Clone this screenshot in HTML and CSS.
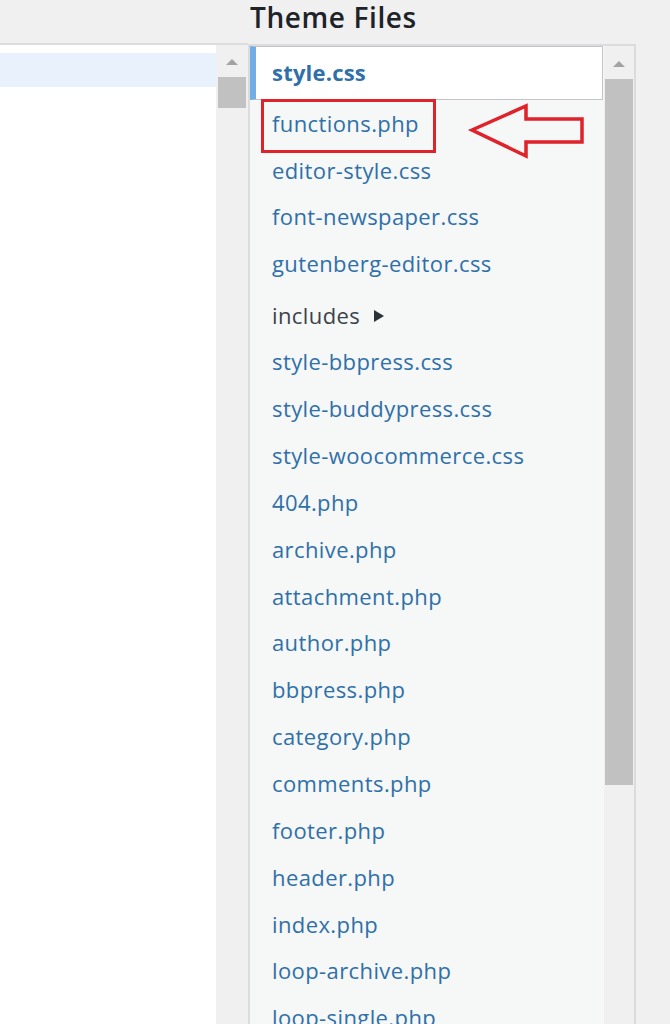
FILE: index.html
```html
<!DOCTYPE html>
<html lang="en">
<head>
<meta charset="utf-8">
<title>Theme Files</title>
<link rel="stylesheet" href="styles.css">
</head>
<body>
<div class="page">
  <div class="editor-col">
    <div class="editor-box">
      <div class="editor-area">
        <div class="editor-line-active"></div>
      </div>
      <div class="vscroll vscroll-left">
        <div class="scroll-arrow"></div>
        <div class="scroll-thumb thumb-small"></div>
      </div>
    </div>
  </div>
  <div class="sidebar">
    <h2 class="title">Theme Files</h2>
    <div class="list-box">
      <ul class="file-list">
        <li class="item current"><span class="link">style.css</span></li>
        <li class="item early"><span class="link">functions.php</span></li>
        <li class="item early"><span class="link">editor-style.css</span></li>
        <li class="item early"><span class="link">font-newspaper.css</span></li>
        <li class="item early"><span class="link">gutenberg-editor.css</span></li>
        <li class="item folder"><span class="folder-name">includes</span><span class="caret"></span></li>
        <li class="item"><span class="link">style-bbpress.css</span></li>
        <li class="item"><span class="link">style-buddypress.css</span></li>
        <li class="item"><span class="link">style-woocommerce.css</span></li>
        <li class="item"><span class="link">404.php</span></li>
        <li class="item"><span class="link">archive.php</span></li>
        <li class="item"><span class="link">attachment.php</span></li>
        <li class="item"><span class="link">author.php</span></li>
        <li class="item"><span class="link">bbpress.php</span></li>
        <li class="item"><span class="link">category.php</span></li>
        <li class="item"><span class="link">comments.php</span></li>
        <li class="item"><span class="link">footer.php</span></li>
        <li class="item"><span class="link">header.php</span></li>
        <li class="item"><span class="link">index.php</span></li>
        <li class="item"><span class="link">loop-archive.php</span></li>
        <li class="item"><span class="link">loop-single.php</span></li>
      </ul>
      <div class="vscroll vscroll-right">
        <div class="scroll-arrow"></div>
        <div class="scroll-thumb thumb-large"></div>
      </div>
    </div>
  </div>
</div>
<div class="highlight-box"></div>
<svg class="arrow" width="130" height="70" viewBox="460 100 130 70" xmlns="http://www.w3.org/2000/svg">
  <polygon points="472,130 526,106 526,119 582,119 582,142 526,142 526,156" fill="none" stroke="#e0222a" stroke-width="3.5" stroke-linejoin="miter"/>
</svg>
</body>
</html>
```
FILE: styles.css
```css
html, body {
  margin: 0;
  padding: 0;
}
body {
  background: #f0f0f1;
  width: 670px;
  height: 1024px;
  overflow: hidden;
  position: relative;
  font-family: "Open Sans", "Noto Sans", sans-serif;
}
.page {
  display: flex;
  align-items: flex-start;
}
.editor-col {
  width: 248px;
  padding-top: 43px;
  flex: none;
}
.editor-box {
  display: flex;
  border-top: 2px solid #dcdcde;
  height: 1000px;
}
.editor-area {
  width: 216px;
  background: #ffffff;
  padding-top: 8px;
}
.editor-line-active {
  height: 34px;
  background: #e8f1fc;
}
.vscroll {
  width: 32px;
  background: #f0f0f1;
  display: flex;
  flex-direction: column;
  align-items: center;
  flex: none;
}
.scroll-arrow {
  width: 0;
  height: 0;
  border-left: 6px solid transparent;
  border-right: 6px solid transparent;
  border-bottom: 6px solid #a3a3a3;
  margin-top: 14px;
  margin-bottom: 12px;
}
.scroll-thumb {
  width: 28px;
  background: #c1c1c1;
}
.thumb-small { height: 31px; }
.thumb-large { height: 706px; }
.vscroll-right {
  width: 30px;
}
.vscroll-right .scroll-arrow {
  margin-top: 15px;
}
.sidebar {
  width: 388px;
  flex: none;
}
.title {
  margin: 0;
  height: 44px;
  box-sizing: border-box;
  padding: 0 0 0 2px;
  font-size: 28px;
  font-weight: 600;
  letter-spacing: 0.6px;
  line-height: 34px;
  color: #1d2327;
}
.list-box {
  display: flex;
  border: 2px solid #dcdcde;
  border-bottom: none;
  height: 990px;
  box-sizing: border-box;
}
.file-list {
  list-style: none;
  margin: 0;
  padding: 0;
  width: 354px;
  background: #f6f7f7;
  flex: none;
}
.item {
  height: 46.85px;
  display: flex;
  align-items: center;
  padding-left: 22px;
  box-sizing: border-box;
  font-size: 22px;
  letter-spacing: 0.4px;
  white-space: nowrap;
}
.item.early {
  height: 46.5px;
}
.item.current {
  height: 54px;
  background: #ffffff;
  border: 1px solid #c3c4c7;
  border-left: 6px solid #72aee6;
  padding-left: 16px;
  margin-right: 1px;
  padding-bottom: 2px;
}
.item.current .link {
  font-weight: 700;
  letter-spacing: 0.2px;
}
.item.folder {
  height: 52px;
  padding-top: 6px;
  color: #3c434a;
}
.link {
  color: #2f70a8;
}
.caret {
  width: 0;
  height: 0;
  border-left: 10px solid #2c3338;
  border-top: 6px solid transparent;
  border-bottom: 6px solid transparent;
  margin-left: 14px;
  margin-top: 1px;
}
.highlight-box {
  position: absolute;
  left: 261px;
  top: 99px;
  width: 175px;
  height: 54px;
  box-sizing: border-box;
  border: 3px solid #e0222a;
}
.arrow {
  position: absolute;
  left: 460px;
  top: 100px;
}
```
